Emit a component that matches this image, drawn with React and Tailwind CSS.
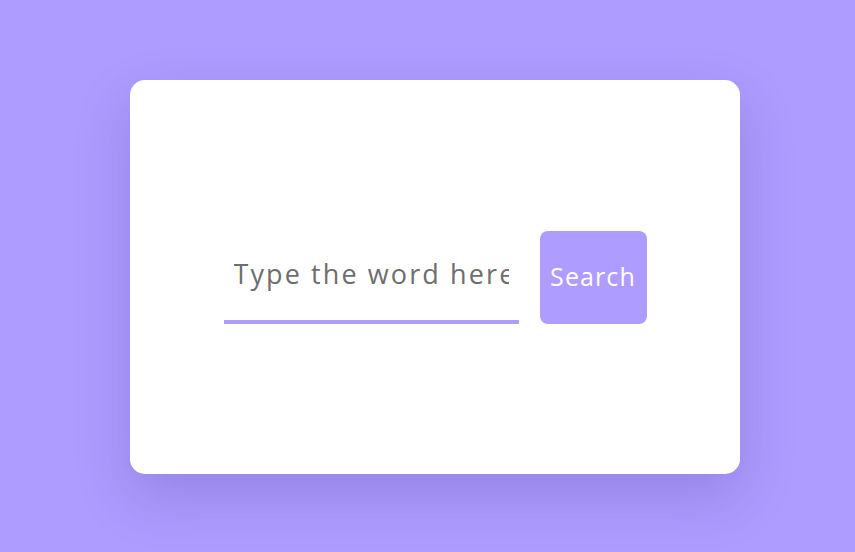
export default function App() {
  return (
    <div
      className="w-[855px] h-[552px] bg-[#ae9cff] pl-[130px] pt-[80px] overflow-hidden"
      style={{ fontFamily: '"Open Sans", "Liberation Sans", sans-serif' }}
    >
      <div className="w-[610px] h-[394px] bg-white rounded-[15px] shadow-[0_22px_55px_rgba(40,20,110,0.18)] flex items-center justify-center">
        <div className="flex items-end gap-[21px]">
          <input
            type="text"
            placeholder="Type the word here"
            className="w-[295px] h-[66px] pl-[10px] pr-[10px] pt-0 pb-[30px] text-[27px] tracking-[2.1px] leading-[32px] border-0 border-b-4 border-[#ae9cff] outline-none bg-transparent text-[#6e6e6e] placeholder:text-[#6e6e6e]"
          />
          <button className="w-[107px] h-[93px] bg-[#ae9cff] rounded-[8px] text-white text-[25px] tracking-[1.1px] flex items-center justify-center">
            Search
          </button>
        </div>
      </div>
    </div>
  );
}
